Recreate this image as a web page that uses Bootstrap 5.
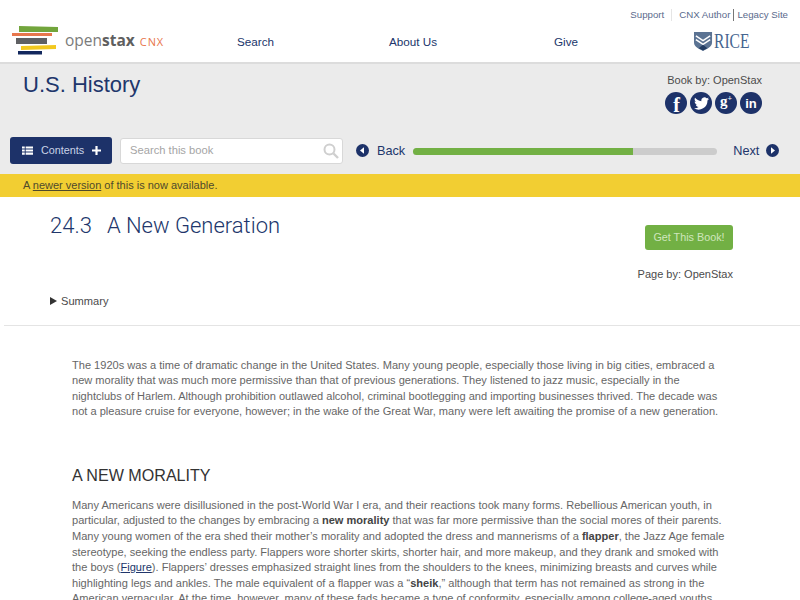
<!DOCTYPE html>
<html lang="en">
<head>
    <meta charset="UTF-8">
    <meta name="viewport" content="width=device-width, initial-scale=1.0">
    <title>U.S. History - A New Generation</title>
    <link href="https://cdn.jsdelivr.net/npm/bootstrap@5.3.2/dist/css/bootstrap.min.css" rel="stylesheet">
    <script src="https://cdn.jsdelivr.net/npm/bootstrap@5.3.2/dist/js/bootstrap.bundle.min.js"></script>
    <style>
        html, body { height: 600px; overflow: hidden; }
        body { font-family: "Liberation Sans", Arial, sans-serif; color: #555; background: #fff; }
        a { color: #21366b; }

        .site-head { height: 64px; border-bottom: 2px solid #dcdcdc; }
        .logo-box { width: 237px; padding-left: 11px; padding-top: 25px; }
        .logo-word { font-family: "Open Sans", sans-serif; font-size: 15.500px; color: #7b7b7b; margin-left: 6px; line-height: 1; margin-top: 8px; }
        .logo-word b { color: #5f5f5f; font-weight: 700; }
        .logo-word span { color: #e8764c; font-size: 11px; margin-left: 5px; letter-spacing: .9px; }
        .top-links { font-size: 9.700px; color: #5a6a8c; padding: 8px 12px 0 0; line-height: 13px; }
        .top-links .sep-faint { border-left: 1px solid #e5e5e5; margin: 0 7px; height: 12px; }
        .top-links .sep-dark { border-left: 1px solid #777; margin: 0 3px; height: 12px; }
        .main-links { font-size: 11.700px; color: #21366b; padding-top: 12px; }
        .rice-word { display: inline-block; font-family: "Liberation Serif", serif; font-size: 20px; color: #46658f; line-height: 1; transform: scaleX(.78); transform-origin: left center; }

        .book-bar { background: #ebebeb; height: 110px; padding: 0 20px 0 23px; }
        .book-name { font-size: 22px; font-weight: 400; color: #21366b; line-height: 28px; margin: 7px 0 0; }
        .book-by { font-size: 11px; color: #4b4b4b; line-height: 15px; margin-top: 9px; text-align: right; padding-right: 18px; }
        .socials { gap: 3px; margin-top: 4px; padding-right: 18px; }
        .soc-dot { width: 22px; height: 22px; border-radius: 50%; background: #1d3269; color: #fff; font-weight: 700; line-height: 1; }
        .soc-f { font-size: 20px; font-family: "Liberation Serif", serif; padding-top: 3px; padding-left: 1px; }
        .soc-g { font-size: 15px; font-family: "Liberation Serif", serif; padding-bottom: 3px; }
        .soc-g sup { font-size: 8px; top: -.3em; }
        .soc-in { font-size: 13px; }
        .tool-row { margin-top: 23px; margin-left: -13px; }
        .btn-contents { width: 102px; height: 27px; background: #1d3269; color: #c9d2e6; font-size: 10.800px; border-radius: 3px; border: 0; padding: 0 0 0 12px; }
        .btn-contents:hover { background: #1d3269; color: #c9d2e6; }
        .search-box { width: 223px; height: 26px; background: #fff; border: 1px solid #d8d8d8; border-radius: 3px; padding: 0 3px 0 9px; margin-left: 8px; font-size: 11.200px; color: #a5a5a5; }
        .pager { font-size: 12.700px; color: #21366b; gap: 8px; }
        .pager-back { margin-left: 13px; }
        .pager-next { margin-left: 16px; gap: 7px; }
        .pager span { padding-top: 3px; }
        .read-track { width: 304px; height: 7px; background: #cccccc; border-radius: 4px; margin-left: 8px; margin-top: 1px; }
        .read-fill { height: 7px; background: #72b044; border-radius: 4px 0 0 4px; }

        .newer-strip { background: #f2ce32; height: 23px; padding-left: 23px; font-size: 11px; line-height: 23px; color: #4f4a2c; }
        .newer-strip a { color: #4f4a2c; }

        .title-block { height: 129px; border-bottom: 1px solid #e4e4e4; margin-left: 4px; padding: 0 67px 0 46px; }
        .title-num { font-family: Roboto, sans-serif; font-size: 22px; color: #21366b; line-height: 26px; margin: 16px 0 0; font-weight: 300; }
        .title-num span { margin-left: 15px; }
        .get-btn { background: #72b044; color: #cfe6bd; font-size: 10.800px; width: 88px; height: 25px; border-radius: 3px; border: 0; padding: 0; margin-top: 28px; }
        .get-btn:hover { background: #72b044; color: #cfe6bd; }
        .page-by { font-size: 11px; color: #4b4b4b; line-height: 15px; margin-top: 17px; }
        .summary-line { font-size: 11.100px; color: #4b4b4b; line-height: 15px; margin-top: -32px; padding-left: 50px; }
        .summary-line i { display: inline-block; border-left: 7px solid #333; border-top: 4px solid transparent; border-bottom: 4px solid transparent; margin-right: 4px; }

        .book-text { padding: 48.500px 0 0 72px; font-size: 11.060px; line-height: 15.600px; color: #666; white-space: nowrap; }
        .book-text p { margin: 0; }
        .book-text b { color: #444; }
        .book-text a { color: #21366b; }
        .book-text h2 { font-size: 16.100px; font-weight: 400; color: #333; line-height: 22px; margin: 44px 0 12px; }
    </style>
</head>
<body>
    <header class="site-head d-flex">
        <div class="logo-box d-flex align-items-start">
            <svg width="48" height="30" viewBox="0 0 48 30">
                <path d="M8 1 L47 2 L47 7 L8 7 Z" fill="#72a53c"/>
                <rect x="1" y="8" width="40" height="3" fill="#e8774d"/>
                <rect x="5" y="13" width="31" height="6" fill="#5f6063"/>
                <path d="M10 21 L45 20 L45 24 L10 25 Z" fill="#f2c81e"/>
                <rect x="7" y="26" width="24" height="3.5" fill="#12285e"/>
            </svg>
            <div class="logo-word">open<b>stax</b><span>CNX</span></div>
        </div>
        <div class="flex-grow-1">
            <div class="top-links d-flex justify-content-end align-items-center">
                <span>Support</span><span class="sep-faint"></span><span>CNX Author</span><span class="sep-dark"></span><span>Legacy Site</span>
            </div>
            <div class="main-links d-flex align-items-center">
                <span style="width:152px">Search</span>
                <span style="width:165px">About Us</span>
                <span style="width:140px">Give</span>
                <span class="d-flex align-items-center" style="gap:1px;margin-top:-2px">
                    <svg width="19" height="20" viewBox="0 0 20 21">
                        <path d="M0 1 H19 V12 C19 17 13 19 9.5 21 C6 19 0 17 0 12 Z" fill="#5b7393"/>
                        <path d="M2 5 L9.5 10 L17 5 M2 9 L9.5 14 L17 9" fill="none" stroke="#fff" stroke-width="1.6"/>
                        <path d="M5 18 L9.5 14.5 L14 18 L9.5 20.5 Z" fill="#223c63"/>
                    </svg>
                    <span class="rice-word">RICE</span>
                </span>
            </div>
        </div>
    </header>

    <section class="book-bar">
        <div class="d-flex justify-content-between">
            <h1 class="book-name">U.S. History</h1>
            <div>
                <div class="book-by">Book by: OpenStax</div>
                <div class="socials d-flex justify-content-end">
                    <span class="soc-dot soc-f d-flex align-items-center justify-content-center">f</span>
                    <span class="soc-dot d-flex align-items-center justify-content-center">
                        <svg width="15" height="13" viewBox="0 0 24 20"><path fill="#fff" d="M24 2.4c-.9.4-1.8.7-2.8.8 1-.6 1.8-1.6 2.2-2.7-1 .6-2 1-3.1 1.2A4.9 4.9 0 0 0 11.900 6.200C7.800 6 4.200 4 1.700.9.400 3.100 1 6 3.200 7.500c-.8 0-1.600-.2-2.200-.6 0 2.400 1.700 4.500 3.900 5-.7.2-1.500.2-2.200.1.600 2 2.400 3.400 4.600 3.400A9.900 9.900 0 0 1 0 17.500 14 14 0 0 0 21.500 5c1-.7 1.800-1.600 2.500-2.600z"/></svg>
                    </span>
                    <span class="soc-dot soc-g d-flex align-items-center justify-content-center">g<sup>+</sup></span>
                    <span class="soc-dot soc-in d-flex align-items-center justify-content-center">in</span>
                </div>
            </div>
        </div>
        <div class="tool-row d-flex align-items-center">
            <button class="btn btn-contents d-flex align-items-center">
                <svg width="11" height="9" viewBox="0 0 12 9" class="me-2"><path fill="#fff" d="M0 0h3v2.400H0zM4 0h8v2.400H4zM0 3.300h3v2.400H0zM4 3.300h8v2.400H4zM0 6.600h3V9H0zM4 6.600h8V9H4z"/></svg>
                Contents
                <svg width="9" height="9" viewBox="0 0 10 10" class="ms-2"><path fill="#fff" d="M3.800 0h2.400v3.800H10v2.400H6.200V10H3.800V6.200H0V3.800h3.800z"/></svg>
            </button>
            <div class="search-box d-flex align-items-center justify-content-between">
                <span>Search this book</span>
                <svg width="16" height="16" viewBox="0 0 16 16"><circle cx="6.500" cy="6.500" r="5" fill="none" stroke="#cfcfcf" stroke-width="2"/><path d="M10.500 10.500 L15 15" stroke="#cfcfcf" stroke-width="2.400"/></svg>
            </div>
            <div class="pager pager-back d-flex align-items-center">
                <svg width="13" height="13" viewBox="0 0 13 13"><circle cx="6.500" cy="6.500" r="6.500" fill="#1d3269"/><path d="M8 3.300 L4 6.500 L8 9.700 Z" fill="#fff"/></svg>
                <span>Back</span>
            </div>
            <div class="read-track">
                <div class="read-fill" style="width:72.400%"></div>
            </div>
            <div class="pager pager-next d-flex align-items-center">
                <span>Next</span>
                <svg width="13" height="13" viewBox="0 0 13 13"><circle cx="6.500" cy="6.500" r="6.500" fill="#1d3269"/><path d="M5 3.300 L9 6.500 L5 9.700 Z" fill="#fff"/></svg>
            </div>
        </div>
    </section>

    <div class="newer-strip">A <a href="#">newer version</a> of this is now available.</div>

    <section class="title-block d-flex justify-content-between">
        <div>
            <h2 class="title-num">24.3<span>A New Generation</span></h2>
        </div>
        <div class="d-flex flex-column align-items-end">
            <button class="btn get-btn">Get This Book!</button>
            <div class="page-by">Page by: OpenStax</div>
        </div>
    </section>
    <div class="summary-line"><i></i>Summary</div>

    <main class="book-text">
        <p>The 1920s was a time of dramatic change in the United States. Many young people, especially those living in big cities, embraced a<br>
        new morality that was much more permissive than that of previous generations. They listened to jazz music, especially in the<br>
        nightclubs of Harlem. Although prohibition outlawed alcohol, criminal bootlegging and importing businesses thrived. The decade was<br>
        not a pleasure cruise for everyone, however; in the wake of the Great War, many were left awaiting the promise of a new generation.</p>
        <h2>A NEW MORALITY</h2>
        <p>Many Americans were disillusioned in the post-World War I era, and their reactions took many forms. Rebellious American youth, in<br>
        particular, adjusted to the changes by embracing a <b>new morality</b> that was far more permissive than the social mores of their parents.<br>
        Many young women of the era shed their mother’s morality and adopted the dress and mannerisms of a <b>flapper</b>, the Jazz Age female<br>
        stereotype, seeking the endless party. Flappers wore shorter skirts, shorter hair, and more makeup, and they drank and smoked with<br>
        the boys (<a href="#">Figure</a>). Flappers’ dresses emphasized straight lines from the shoulders to the knees, minimizing breasts and curves while<br>
        highlighting legs and ankles. The male equivalent of a flapper was a “<b>sheik</b>,” although that term has not remained as strong in the<br>
        American vernacular. At the time, however, many of these fads became a type of conformity, especially among college-aged youths.</p>
    </main>
</body>
</html>
